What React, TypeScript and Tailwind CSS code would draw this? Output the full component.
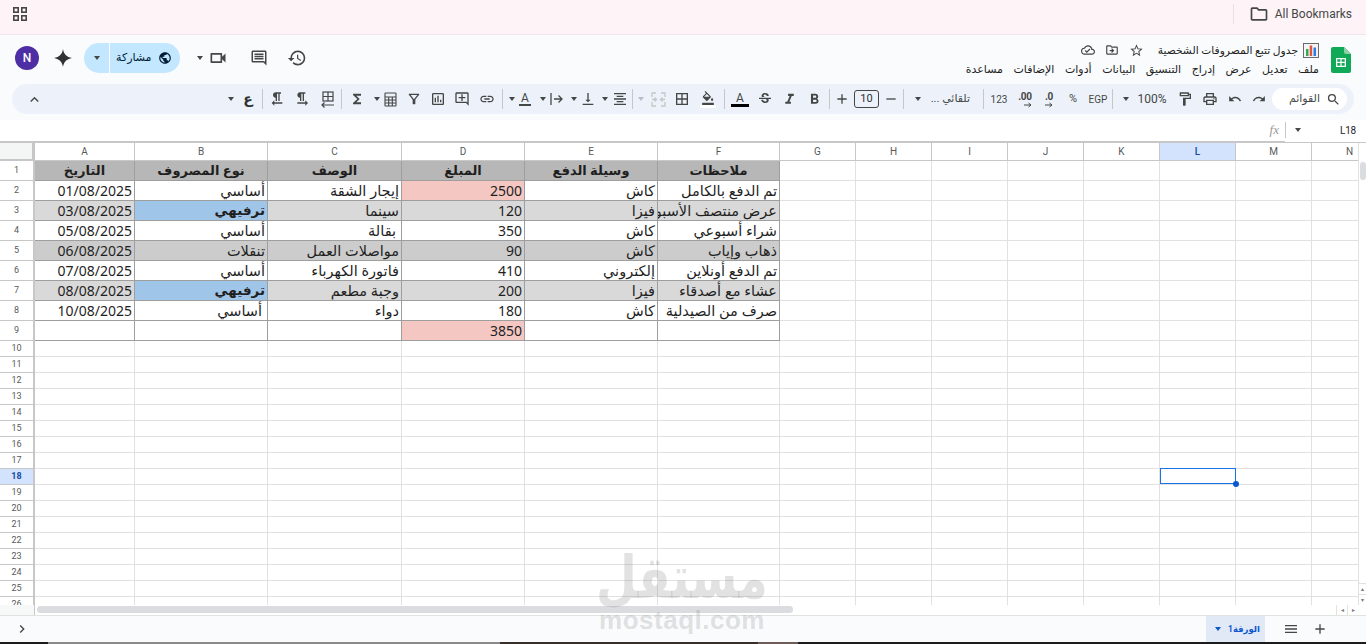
import React from "react";
import {
  MdAdd,
  MdChevronRight,
  MdFormatAlignCenter,
  MdFormatBold,
  MdFormatItalic,
  MdFormatTextdirectionLToR,
  MdFormatTextdirectionRToL,
  MdFunctions,
  MdHistory,
  MdKeyboardArrowUp,
  MdLink,
  MdMenu,
  MdOutlineAddComment,
  MdOutlineBorderAll,
  MdOutlineCloudDone,
  MdOutlineComment,
  MdOutlineDriveFileMove,
  MdOutlineFilterAlt,
  MdOutlineFolder,
  MdOutlineFormatColorFill,
  MdOutlineFormatPaint,
  MdOutlineInsertChart,
  MdOutlinePrint,
  MdOutlineVideocam,
  MdPublic,
  MdRedo,
  MdRemove,
  MdSearch,
  MdStarBorder,
  MdStrikethroughS,
  MdUndo,
  MdVerticalAlignBottom,
} from "react-icons/md";

const cols = [
  "w-[100px]",
  "w-[133px]",
  "w-[134px]",
  "w-[123px]",
  "w-[133px]",
  "w-[122px]",
  "w-[76px]",
  "w-[76px]",
  "w-[76px]",
  "w-[76px]",
  "w-[76px]",
  "w-[76px]",
  "w-[76px]",
  "w-[76px]",
];
const letters = ["A", "B", "C", "D", "E", "F", "G", "H", "I", "J", "K", "L", "M", "N"];

type Row = { bg: string; cells: string[] };

const rows: Row[] = [
  { bg: "bg-[#d9d9d9]", cells: [] },
  { bg: "bg-white", cells: ["01/08/2025", "أساسي", "إيجار الشقة", "2500", "كاش", "تم الدفع بالكامل"] },
  { bg: "bg-[#d9d9d9]", cells: ["03/08/2025", "ترفيهي", "سينما", "120", "فيزا", "عرض منتصف الأسبوع"] },
  { bg: "bg-white", cells: ["05/08/2025", "أساسي", "بقالة ", "350", "كاش", "شراء أسبوعي"] },
  { bg: "bg-[#cccccc]", cells: ["06/08/2025", "تنقلات", "مواصلات العمل", "90", "كاش", "ذهاب وإياب"] },
  { bg: "bg-white", cells: ["07/08/2025", "أساسي", "فاتورة الكهرباء", "410", "إلكتروني", "تم الدفع أونلاين"] },
  { bg: "bg-[#d9d9d9]", cells: ["08/08/2025", "ترفيهي", "وجبة مطعم", "200", "فيزا", "عشاء مع أصدقاء"] },
  { bg: "bg-white", cells: ["10/08/2025", "أساسي ", "دواء", "180", "كاش", "صرف من الصيدلية"] },
  { bg: "bg-white", cells: ["", "", "", "3850", "", ""] },
];

const headers = ["التاريخ", "نوع المصروف", "الوصف", "المبلغ", "وسيلة الدفع", "ملاحظات"];

const cellFont = "font-['Noto_Sans','DejaVu_Sans',sans-serif]";
const uiFont = "font-['Roboto','DejaVu_Sans',sans-serif]";

function Caret({ className = "" }: { className?: string }) {
  return (
    <div className={`w-2 h-5 shrink-0 flex items-center justify-center ${className}`}>
      <div className="w-0 h-0 border-x-[3.5px] border-t-[4px] border-x-transparent border-t-[#444746]" />
    </div>
  );
}

function Divider({ className = "" }: { className?: string }) {
  return <div className={`w-px h-5 shrink-0 bg-[#c7c7c7] ${className}`} />;
}

function Tool({ className = "", children }: { className?: string; children: React.ReactNode }) {
  return (
    <div className={`w-[18px] h-5 shrink-0 flex items-center justify-center text-[#444746] ${className}`}>
      {children}
    </div>
  );
}

function SheetsLogo() {
  return (
    <svg width="20" height="26" viewBox="0 0 20 26">
      <path d="M2 0h11l7 7v17a2 2 0 0 1-2 2H2a2 2 0 0 1-2-2V2a2 2 0 0 1 2-2z" fill="#0fa958" />
      <path d="M13 0l7 7h-5a2 2 0 0 1-2-2z" fill="#8ed1a9" />
      <path d="M5 11h10v9H5zM6.3 12.3v2.4h3.1v-2.4zm4.3 0v2.4h3.1v-2.4zM6.3 16v2.7h3.1V16zm4.3 0v2.7h3.1V16z" fill="#fff" fillRule="evenodd" />
    </svg>
  );
}

function Spark() {
  return (
    <svg width="18" height="18" viewBox="0 0 18 18">
      <path d="M9 0c.7 5 3.5 8 9 9-5.500 1-8.300 4-9 9-.7-5-3.500-8-9-9 5.500-1 8.300-4 9-9z" fill="#303233" />
    </svg>
  );
}

function ChartEmoji() {
  return (
    <svg width="16" height="15" viewBox="0 0 16 15">
      <rect x="0.500" y="0.500" width="15" height="14" fill="#f4f4f4" stroke="#6b6b6b" />
      <rect x="3" y="6" width="2.500" height="7" fill="#34a853" />
      <rect x="6.700" y="2.500" width="2.500" height="10.500" fill="#e5533d" />
      <rect x="10.500" y="4.500" width="2.500" height="8.500" fill="#2b7de9" />
    </svg>
  );
}

function AppsIcon() {
  return (
    <svg width="14" height="14" viewBox="0 0 14 14" fill="none" stroke="#444746" strokeWidth="1.600">
      <rect x="0.800" y="0.800" width="4.400" height="4.400" />
      <rect x="8.800" y="0.800" width="4.400" height="4.400" />
      <rect x="0.800" y="8.800" width="4.400" height="4.400" />
      <rect x="8.800" y="8.800" width="4.400" height="4.400" />
    </svg>
  );
}

function TableRtl() {
  return (
    <svg width="15" height="17" viewBox="0 0 15 17" fill="none" stroke="#444746" strokeWidth="1.200">
      <rect x="3" y="1" width="10" height="9" />
      <path d="M8 1v9M3 5.500h10" />
      <path d="M14 14H2M4.500 11.500 2 14l2.500 2.500" />
    </svg>
  );
}

function CalcIcon() {
  return (
    <svg width="13" height="15" viewBox="0 0 13 15" fill="none" stroke="#444746" strokeWidth="1.100">
      <rect x="1" y="1" width="11" height="13" rx="0.500" />
      <path d="M1 5h11M1 8h11M1 11h11M4.700 5v9M8.300 5v9" />
    </svg>
  );
}

function WrapIcon() {
  return (
    <svg width="14" height="14" viewBox="0 0 14 14" fill="none" stroke="#444746" strokeWidth="1.300">
      <path d="M2 1v12M5 7h8M9.500 3.500 13 7l-3.500 3.500" />
    </svg>
  );
}

function MergeIcon() {
  return (
    <svg width="15" height="15" viewBox="0 0 15 15" fill="none" stroke="#c4c7c5" strokeWidth="1.300">
      <path d="M1 5V1h4M10 1h4v4M14 10v4h-4M5 14H1v-4" />
      <path d="M1 7.500h4M3.500 5.500l2 2-2 2M14 7.500h-4M11.500 5.500l-2 2 2 2" />
    </svg>
  );
}

function DecimalIcon({ label }: { label: string }) {
  return (
    <div className="flex flex-col items-center leading-none">
      <span className={`${uiFont} text-[10px] font-bold leading-[11px] tracking-[-0.3px] text-[#444746]`}>{label}</span>
      <svg width="8" height="6" viewBox="0 0 8 6" fill="none" stroke="#444746" strokeWidth="1" className="self-end">
        <path d="M0 3h7M4.500 1 7 3 4.500 5" />
      </svg>
    </div>
  );
}

function Toolbar() {
  return (
    <div dir="ltr" className="mx-3 h-[30px] w-[1342px] rounded-full bg-[#edf2fa] flex items-center">
      <Tool className="ml-[13px]">
        <MdKeyboardArrowUp size={17} />
      </Tool>
      <Caret className="ml-[184px]" />
      <Tool className="ml-1">
        <span className={`${uiFont} text-[14px] font-bold text-[#303233]`}>ع</span>
      </Tool>
      <Divider className="ml-[5px]" />
      <Tool className="ml-[5px]">
        <MdFormatTextdirectionRToL size={16} />
      </Tool>
      <Tool className="ml-[7px]">
        <MdFormatTextdirectionLToR size={16} />
      </Tool>
      <Tool className="ml-[7px]">
        <TableRtl />
      </Tool>
      <Divider className="ml-[5px]" />
      <Tool className="ml-1.5">
        <MdFunctions size={16} />
      </Tool>
      <Caret className="ml-[7px]" />
      <Tool>
        <CalcIcon />
      </Tool>
      <Tool className="ml-1.5">
        <MdOutlineFilterAlt size={16} />
      </Tool>
      <Tool className="ml-1.5">
        <MdOutlineInsertChart size={16} />
      </Tool>
      <Tool className="ml-1.5">
        <MdOutlineAddComment size={16} />
      </Tool>
      <Tool className="ml-[7px]">
        <MdLink size={16} />
      </Tool>
      <Divider className="ml-1.5" />
      <Caret className="ml-[5px]" />
      <Tool>
        <div className="flex flex-col items-center">
          <span className={`${uiFont} text-[12px] leading-[12px] text-[#444746]`}>A</span>
          <div className="w-3 h-[2px] bg-[#444746]" />
        </div>
      </Tool>
      <Caret className="ml-[5px]" />
      <Tool>
        <WrapIcon />
      </Tool>
      <Caret className="ml-[5px]" />
      <Tool className="ml-px">
        <MdVerticalAlignBottom size={16} />
      </Tool>
      <Caret className="ml-1" />
      <Tool className="ml-0.5">
        <MdFormatAlignCenter size={16} />
      </Tool>
      <Divider className="ml-[3px]" />
      <Caret className="ml-1 opacity-30" />
      <Tool className="ml-1">
        <MergeIcon />
      </Tool>
      <Tool className="ml-1.5">
        <MdOutlineBorderAll size={16} />
      </Tool>
      <Tool className="ml-2">
        <div className="flex flex-col items-center">
          <MdOutlineFormatColorFill size={14} />
          <div className="w-4 h-[3px] bg-white" />
        </div>
      </Tool>
      <Divider className="ml-[7px]" />
      <Tool className="ml-1.5">
        <div className="flex flex-col items-center">
          <span className={`${uiFont} text-[12px] leading-[12px] text-[#444746]`}>A</span>
          <div className="w-[18px] h-[3px] bg-black" />
        </div>
      </Tool>
      <Tool className="ml-[7px]">
        <MdStrikethroughS size={16} />
      </Tool>
      <Tool className="ml-1.5">
        <MdFormatItalic size={17} />
      </Tool>
      <Tool className="ml-[7px]">
        <MdFormatBold size={17} />
      </Tool>
      <Divider className="ml-1.5" />
      <Tool className="ml-[3px]">
        <MdAdd size={16} />
      </Tool>
      <div className={`ml-[3px] w-[25px] h-[18px] shrink-0 rounded-[3px] border border-[#444746] flex items-center justify-center ${uiFont} text-[11px] text-[#303233]`}>
        10
      </div>
      <Tool className="ml-[3px]">
        <MdRemove size={16} />
      </Tool>
      <Divider className="ml-[3px]" />
      <Caret className="ml-2.5" />
      <div dir="rtl" className={`ml-[11px] w-[37px] shrink-0 text-[11px] text-[#444746] whitespace-nowrap ${uiFont}`}>
        تلقائي ...
      </div>
      <Divider className="ml-[13px]" />
      <Tool className="ml-1.5">
        <span className={`${uiFont} text-[10px] text-[#444746]`}>123</span>
      </Tool>
      <Tool className="ml-2">
        <DecimalIcon label=".00" />
      </Tool>
      <Tool className="ml-1.5">
        <DecimalIcon label=".0" />
      </Tool>
      <Tool className="ml-1.5">
        <span className={`${uiFont} text-[11px] text-[#444746]`}>%</span>
      </Tool>
      <Tool className="ml-[7px]">
        <span className={`${uiFont} text-[10px] text-[#444746]`}>EGP</span>
      </Tool>
      <Divider className="ml-[5px]" />
      <Caret className="ml-[9px]" />
      <div className={`ml-[7px] w-[30px] shrink-0 text-center text-[12px] text-[#444746] ${uiFont}`}>100%</div>
      <Tool className="ml-[9px]">
        <MdOutlineFormatPaint size={16} />
      </Tool>
      <Tool className="ml-[7px]">
        <MdOutlinePrint size={16} />
      </Tool>
      <Tool className="ml-[7px]">
        <MdUndo size={14} />
      </Tool>
      <Tool className="ml-1.5">
        <MdRedo size={14} />
      </Tool>
      <div className="ml-1 w-[75px] h-[22px] shrink-0 rounded-full bg-white flex items-center justify-end pr-1.5 gap-1.5">
        <span className={`${uiFont} text-[11px] text-[#444746]`}>القوائم</span>
        <MdSearch size={15} className="text-[#444746]" />
      </div>
    </div>
  );
}

function GridRow({ n, children, heightClass, active }: { n: number; children: React.ReactNode; heightClass: string; active?: boolean }) {
  return (
    <div className={`flex shrink-0 ${heightClass}`}>
      <div
        className={`w-[35px] shrink-0 flex items-center justify-center border-r-2 border-b border-[#c7c7c7] ${uiFont} text-[9px] ${
          active ? "bg-[#d3e3fd] font-bold text-[#174ea6]" : "bg-white text-[#575a5a]"
        }`}
      >
        {n}
      </div>
      {children}
    </div>
  );
}

function DataCell({ row, col, text }: { row: number; col: number; text: string }) {
  const isBlue = text === "ترفيهي";
  const isPink = col === 3 && (row === 1 || row === 8);
  const isNum = col === 0 || col === 3;
  const padded = text.endsWith(" ");
  return (
    <div
      dir={isNum ? "ltr" : "rtl"}
      className={`${cols[col]} shrink-0 overflow-hidden whitespace-nowrap border-r border-b border-[#9e9e9e] leading-[19px] text-[#1f1f1f] ${cellFont} ${
        isNum ? "text-right text-[14px]" : isBlue ? "text-[13.5px]" : "text-[14.5px]"
      } ${padded ? "pr-[5px]" : "pr-0.5"} ${isBlue ? "bg-[#9fc5e8] font-bold" : isPink ? "bg-[#f4c7c3]" : rows[row].bg}`}
    >
      {text.trim()}
    </div>
  );
}

function EmptyCells({ start, selected }: { start: number; selected?: boolean }) {
  return (
    <>
      {cols.slice(start).map((w, i) => (
        <div key={i} className={`${w} shrink-0 relative border-r border-b border-[#e1e1e1] bg-white`}>
          {selected && i + start === 11 && (
            <div className="absolute left-0 top-[-1px] w-[76px] h-[16px] z-10 border-[1.5px] border-[#1a73e8]">
              <div className="absolute right-[-4px] bottom-[-4px] w-[6px] h-[6px] rounded-full bg-[#0b57d0]" />
            </div>
          )}
        </div>
      ))}
    </>
  );
}

function Grid() {
  const emptyRows = Array.from({ length: 17 }, (_, i) => i + 10);
  return (
    <div className="h-[462px] flex shrink-0">
      <div className="w-[1358px] overflow-hidden flex flex-col">
        <div className="flex h-[18px] shrink-0">
          <div className="w-[35px] shrink-0 bg-[#f4f5f5] border-r-[3px] border-b-2 border-[#c7c7c7]" />
          {letters.map((l, i) => (
            <div
              key={l}
              className={`${cols[i]} shrink-0 flex items-center justify-center border-r border-b border-[#c7c7c7] ${uiFont} text-[10px] ${
                i === 11 ? "bg-[#d3e3fd] text-[#174ea6] font-medium" : "bg-white text-[#575a5a]"
              }`}
            >
              {l}
            </div>
          ))}
        </div>

        <GridRow n={1} heightClass="h-5">
          {headers.map((h, i) => (
            <div
              key={h}
              dir="rtl"
              className={`${cols[i]} shrink-0 text-center bg-[#b7b7b7] border-r border-b border-[#9e9e9e] text-[13px] font-bold leading-[19px] text-[#1f1f1f] whitespace-nowrap overflow-hidden ${cellFont}`}
            >
              {h}
            </div>
          ))}
          <EmptyCells start={6} />
        </GridRow>

        {rows.slice(1).map((r, ri) => (
          <GridRow key={ri} n={ri + 2} heightClass="h-5">
            {r.cells.map((c, ci) => (
              <DataCell key={ci} row={ri + 1} col={ci} text={c} />
            ))}
            <EmptyCells start={6} />
          </GridRow>
        ))}

        {emptyRows.map((n) => (
          <GridRow key={n} n={n} heightClass="h-4" active={n === 18}>
            <EmptyCells start={0} selected={n === 18} />
          </GridRow>
        ))}
      </div>

      <div className="w-2 shrink-0 bg-white border-l border-[#e1e1e1] flex flex-col">
        <div className="mt-[19px] mx-px h-[18px] w-[6px] rounded-full bg-[#dadce0]" />
        <div className="flex-1" />
        <div className="h-[11px] border-t border-[#e1e1e1] flex items-center justify-center text-[6px] leading-none text-[#777]">▴</div>
        <div className="h-[11px] border-t border-[#e1e1e1] flex items-center justify-center text-[6px] leading-none text-[#777]">▾</div>
      </div>
    </div>
  );
}

export default function App() {
  return (
    <div className="relative w-[1366px] h-[644px] overflow-hidden bg-white flex flex-col" dir="ltr">
      {/* bookmarks bar */}
      <div className="h-[35px] shrink-0 bg-[#fef4f8] border-b border-[#f3e3ea] flex items-center pl-[13px] pb-[6px]">
        <AppsIcon />
        <div className="ml-auto h-5 w-px bg-[#eadfe3]" />
        <MdOutlineFolder size={20} className="ml-[15px] text-[#444746]" />
        <span className="ml-[6px] mr-[14px] font-['Roboto',sans-serif] text-[12px] text-[#444746]">All Bookmarks</span>
      </div>

      {/* doc header and toolbar */}
      <div className="h-[85px] shrink-0 bg-[#f9fbfd] flex flex-col">
        <div className="h-[49px] shrink-0 flex items-center px-[15px] pb-[3px]">
          <div className="w-6 h-6 rounded-full bg-[#4e2ea5] text-white flex items-center justify-center font-['Roboto',sans-serif] text-[12px] font-medium">
            N
          </div>
          <div className="ml-[15px]">
            <Spark />
          </div>
          <div className="ml-[12px] w-[96px] h-[30px] rounded-full bg-[#c2e7ff] flex items-center overflow-hidden">
            <div className="w-[26px] h-full flex items-center justify-center border-r border-white">
              <Caret />
            </div>
            <span className={`ml-[6px] text-[11px] text-[#001d35] ${uiFont}`}>مشاركة</span>
            <MdPublic size={14} className="ml-[6px] text-[#001d35]" />
          </div>
          <Caret className="ml-[16px]" />
          <MdOutlineVideocam size={20} className="ml-[4px] text-[#444746]" />
          <MdOutlineComment size={18} className="ml-[22px] text-[#444746]" />
          <MdHistory size={20} className="ml-[19px] text-[#444746]" />

          <div className="ml-auto mt-[2px] flex items-start gap-[12px]">
            <div className="flex flex-col items-end">
              <div className="flex items-center h-[18px]">
                <MdOutlineCloudDone size={14} className="text-[#444746]" />
                <MdOutlineDriveFileMove size={14} className="ml-[10px] text-[#444746]" />
                <MdStarBorder size={15} className="ml-[10px] text-[#444746]" />
                <span dir="rtl" className={`ml-[14px] text-[10.7px] leading-[18px] pt-px text-[#1f1f1f] whitespace-nowrap ${uiFont}`}>
                  جدول تتبع المصروفات الشخصية
                </span>
                <div className="ml-[5px]">
                  <ChartEmoji />
                </div>
              </div>
              <div dir="rtl" className={`mt-[4px] flex gap-[10.5px] text-[11px] leading-[14px] text-[#1f1f1f] whitespace-nowrap ${uiFont}`}>
                <span>ملف</span>
                <span>تعديل</span>
                <span>عرض</span>
                <span>إدراج</span>
                <span>التنسيق</span>
                <span>البيانات</span>
                <span>أدوات</span>
                <span>الإضافات</span>
                <span>مساعدة</span>
              </div>
            </div>
            <div className="mt-[6px]">
              <SheetsLogo />
            </div>
          </div>
        </div>
        <Toolbar />
      </div>

      {/* formula bar */}
      <div className="h-[23px] shrink-0 flex">
        <div className="w-[1285px] bg-white border-b-2 border-[#c7c7c7] flex items-center justify-end pr-[6px]">
          <span className="font-['Liberation_Serif',serif] italic text-[13px] text-[#9a9a9a] mb-[2px]">fx</span>
        </div>
        <div className="flex-1 bg-white border-b border-[#c7c7c7] flex items-center pb-[2px]">
          <div className="w-px h-4 bg-[#c7c7c7]" />
          <Caret className="ml-[8px]" />
          <span className={`ml-auto mr-[10px] text-[10px] tracking-[-0.2px] text-[#1f1f1f] ${uiFont}`}>L18</span>
        </div>
      </div>

      <Grid />

      {/* horizontal scrollbar */}
      <div className="h-[10px] shrink-0 flex bg-white">
        <div className="w-[35px] bg-[#f7f8f8] border-r border-[#c7c7c7]" />
        <div className="ml-[2px] mt-px w-[756px] h-[7px] rounded-full bg-[#dadce0]" />
        <div className="ml-auto flex mr-2">
          <div className="w-[11px] border-l border-[#e1e1e1] flex items-center justify-center text-[6px] text-[#777]">◂</div>
          <div className="w-[11px] border-l border-[#e1e1e1] flex items-center justify-center text-[6px] text-[#777]">▸</div>
        </div>
      </div>

      {/* sheet tabs */}
      <div className="h-[27px] shrink-0 bg-[#f9fbfd] border-t border-[#e1e3e1] flex items-center">
        <MdChevronRight size={16} className="ml-[14px] text-[#444746]" />
        <div className="ml-auto h-full w-[59px] bg-[#e1e9f7] flex items-center pl-[9px] gap-[7px]">
          <div className="w-0 h-0 border-x-[3.500px] border-t-[4px] border-x-transparent border-t-[#0b57d0]" />
          <span dir="rtl" className={`text-[8.5px] font-bold text-[#0b57d0] ${uiFont}`}>الورقة1</span>
        </div>
        <MdMenu size={16} className="ml-[18px] text-[#444746]" />
        <MdAdd size={16} className="ml-[13px] mr-[38px] text-[#444746]" />
      </div>

      {/* taskbar edge */}
      <div className="h-[2px] shrink-0 flex">
        <div className="w-[48px] bg-[#1c1c1c]" />
        <div className="w-[452px] bg-[#8a8a8a]" />
        <div className="w-[258px] bg-[#3a2e28]" />
        <div className="w-[40px] bg-[#6e5d56]" />
        <div className="flex-1 bg-[#1c1c1c]" />
      </div>

      {/* mostaql watermark */}
      <div className="absolute left-[582px] top-[547px] w-[200px] flex flex-col items-center pointer-events-none text-[rgba(110,110,110,0.2)]">
        <span dir="rtl" className="font-['DejaVu_Sans',sans-serif] font-bold text-[47px] leading-[62px] scale-y-125">مستقل</span>
        <span className="font-['Liberation_Sans',sans-serif] font-bold text-[26px] leading-[22px] tracking-[0.5px]">mostaql.com</span>
      </div>
    </div>
  );
}
